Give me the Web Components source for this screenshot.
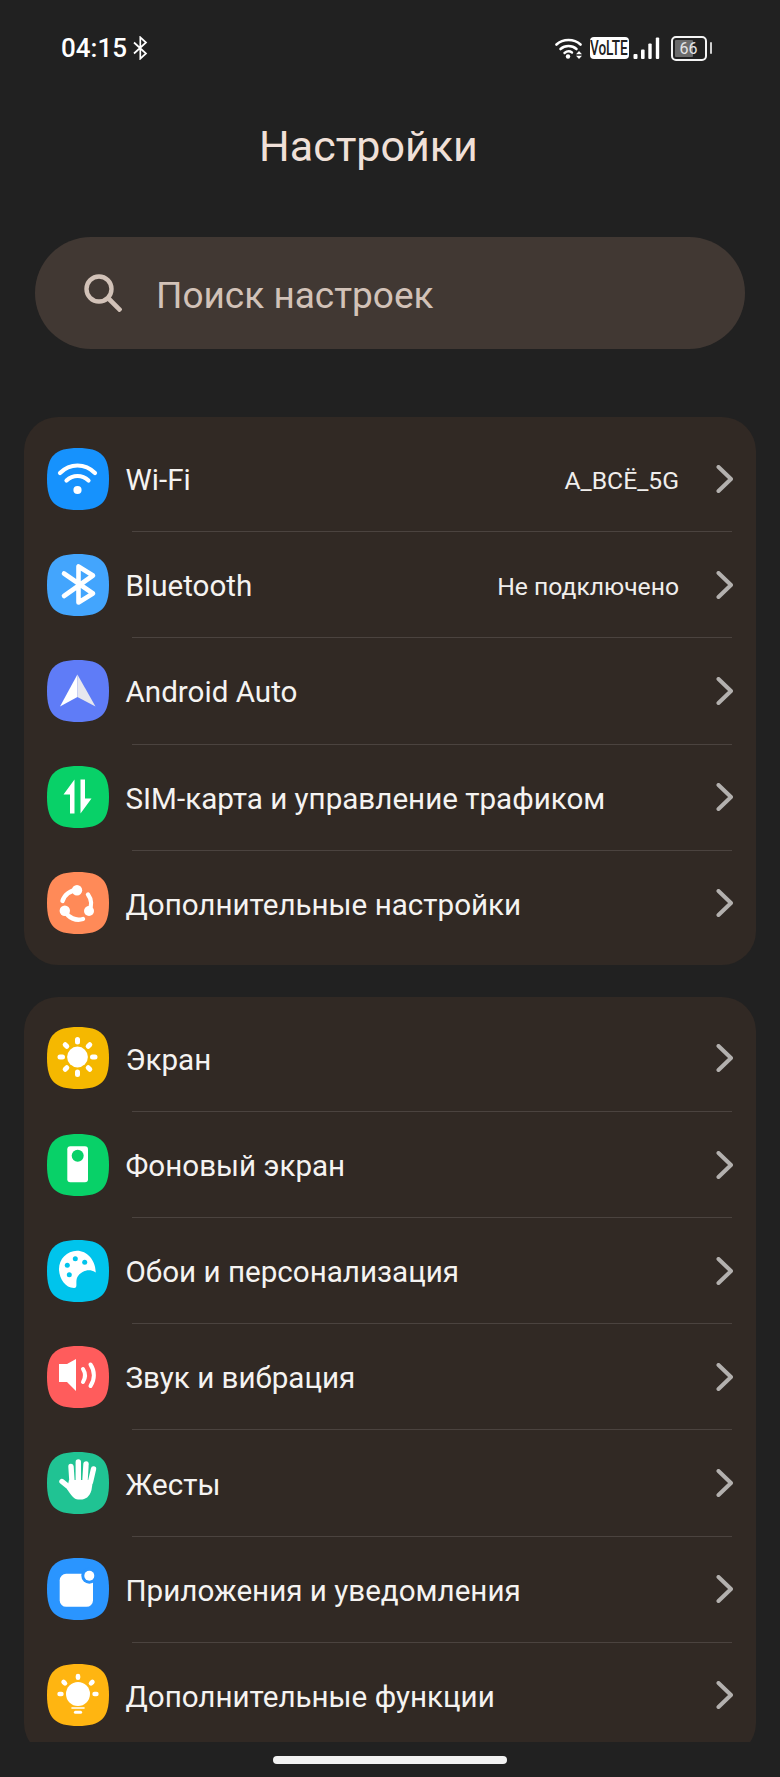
<!DOCTYPE html>
<html lang="ru">
<head>
<meta charset="utf-8">
<title>Настройки</title>
<style>
    html, body { margin: 0; background: #212121; }
    body { font-family: Roboto, "Noto Sans", sans-serif; }
</style>
</head>
<body>
<settings-screen>
    <status-bar time="04:15" battery="66"></status-bar>
    <page-title>Настройки</page-title>
    <search-field>Поиск настроек</search-field>
    <settings-group>
        <settings-row icon="wifi" value="A_ВСЁ_5G">Wi-Fi</settings-row>
        <settings-row icon="bluetooth" value="Не подключено">Bluetooth</settings-row>
        <settings-row icon="auto">Android Auto</settings-row>
        <settings-row icon="sim">SIM-карта и управление трафиком</settings-row>
        <settings-row icon="more">Дополнительные настройки</settings-row>
    </settings-group>
    <settings-group>
        <settings-row icon="display">Экран</settings-row>
        <settings-row icon="background">Фоновый экран</settings-row>
        <settings-row icon="palette">Обои и персонализация</settings-row>
        <settings-row icon="sound">Звук и вибрация</settings-row>
        <settings-row icon="gesture">Жесты</settings-row>
        <settings-row icon="apps">Приложения и уведомления</settings-row>
        <settings-row icon="extra">Дополнительные функции</settings-row>
    </settings-group>
</settings-screen>

<script>
const ICONS = {
    wifi: { bg: "#1692fd", art: `
        <g fill="none" stroke="#fff" stroke-width="4.2" stroke-linecap="round">
            <path d="M13 25C23 15 38 15 48 25"/>
            <path d="M19.5 32.5C26 26.5 35 26.5 41.5 32.5"/>
        </g>
        <circle cx="30.5" cy="42" r="4.1" fill="#fff"/>` },
    bluetooth: { bg: "#43a5fd", art: `
        <path d="M17 42L46 21.5 31.5 12.5V48.5L46 39.5 17 19.5" fill="none" stroke="#fff" stroke-width="4.6" stroke-linejoin="round" stroke-linecap="round"/>` },
    auto: { bg: "#5f7cf7", art: `
        <path d="M30.4 14.5L13 46.5 30.4 37Z" fill="#fff"/>
        <path d="M30.4 14.5L48.5 46.5 30.4 37Z" fill="#e6e7ee"/>` },
    sim: { bg: "#08d168", art: `
        <path d="M27.5 47.5V13.5L16.5 28.5H23V47.5Z" fill="#fff"/>
        <path d="M33.5 13.5V47.5L44.5 32.5H38V13.5Z" fill="#fff"/>` },
    more: { bg: "#ff8a58", art: `
        <g fill="none" stroke="#fff" stroke-width="4.4" stroke-linecap="round">
            <path d="M30 18.3A15 15 0 0 0 15.5 29"/>
            <path d="M18 39A15 15 0 0 0 36 47"/>
            <path d="M42 39A15 15 0 0 0 41 22.5"/>
        </g>
        <g fill="#fff">
            <circle cx="30" cy="18.3" r="5.2"/>
            <circle cx="42" cy="39" r="5"/>
            <circle cx="17.8" cy="38.8" r="5.2"/>
        </g>` },
    display: { bg: "#f5b800", art: `
        <circle cx="30.5" cy="30" r="10.4" fill="#fff"/>
        <g stroke="#fff" stroke-width="5" stroke-linecap="round">
            <path d="M30.5 12.5V15M30.5 45V47.5M13 30H15.5M45.5 30H48"/>
            <path d="M18.2 17.7L19.8 19.3M41.2 40.7L42.8 42.3M18.2 42.3L19.8 40.7M41.2 19.3L42.8 17.7"/>
        </g>` },
    background: { bg: "#08d168", art: `
        <rect x="20.3" y="12.3" width="20.7" height="36" rx="3" fill="#fff"/>
        <circle cx="30.7" cy="21.7" r="6" fill="#08d168"/>` },
    palette: { bg: "#00c4ec", art: `
        <path d="M48.7 32.5C48.7 20 40 10.7 30 10.7 20 10.7 12 19 12 29 12 38 18 48 27 48 30.5 48 29 44 29.5 40 30.5 33 41 27 48.7 32.5Z" fill="#fff"/>
        <g fill="#00c4ec">
            <circle cx="20.3" cy="25.3" r="2.5"/>
            <circle cx="28.3" cy="18.7" r="2.5"/>
            <circle cx="37.7" cy="22.3" r="2.5"/>
            <circle cx="22.3" cy="34.7" r="2.5"/>
        </g>` },
    sound: { bg: "#ff5c5c", art: `
        <path d="M12 18H20L29 13V45L20 36H12Z" fill="#fff"/>
        <g fill="none" stroke="#fff" stroke-width="4" stroke-linecap="round">
            <path d="M36 23C38.5 27 38.5 32 36 36"/>
            <path d="M43.5 18.5C48 25 48 33.5 43.5 40"/>
        </g>` },
    gesture: { bg: "#20c393", art: `
        <g fill="none" stroke="#fff" stroke-width="5.4" stroke-linecap="round">
            <path d="M24 14.5L25 30"/>
            <path d="M31.3 10V29"/>
            <path d="M39 12L38 29"/>
            <path d="M46.5 17L43.5 30"/>
            <path d="M15 29.5L23 36"/>
        </g>
        <path d="M22 28H46L44.5 38C42.5 45 38.5 47.5 33.5 47.5H31C27 47.5 24 43 20 37Z" fill="#fff"/>` },
    apps: { bg: "#2a95ff", art: `
        <rect x="12.7" y="15.8" width="33.3" height="33" rx="6.5" fill="#fff"/>
        <circle cx="42.3" cy="17.7" r="8" fill="#2a95ff"/>
        <circle cx="42.3" cy="17.7" r="5" fill="#fff"/>` },
    extra: { bg: "#ffb511", art: `
        <circle cx="31" cy="30" r="12" fill="#fff"/>
        <g stroke="#fff" stroke-width="4.6" stroke-linecap="round">
            <path d="M31 12V13.8M12.6 30H14.4M47.6 30H49.4"/>
            <path d="M16.6 18L18 19.4M45.4 18L44 19.4"/>
        </g>
        <path d="M25 44H37" stroke="#fff" stroke-width="1.6" stroke-linecap="round"/>
        <path d="M28.4 48.3H33.6" stroke="#fff" stroke-width="3" stroke-linecap="round"/>` }
};

class SettingsScreen extends HTMLElement {
    constructor() {
        super();
        this.attachShadow({ mode: "open" });
        this.shadowRoot.innerHTML = `
        <style>
            :host {
                display: flex;
                flex-direction: column;
                width: 780px;
                height: 1777px;
                overflow: hidden;
                background: #212121;
                font-family: Roboto, "Noto Sans", sans-serif;
            }
            .list {
                display: flex;
                flex-direction: column;
                gap: 32px;
                height: 1325px;
                margin: 0 24px;
                overflow: hidden;
            }
            .home {
                width: 234px;
                height: 8px;
                margin: 14px auto 0;
                border-radius: 4px;
                background: #f2f2f2;
            }
        </style>
        <slot name="top"></slot>
        <div class="list"><slot></slot></div>
        <div class="home"></div>
        `;
    }
    connectedCallback() {
        for (const el of this.children) {
            if (el.localName !== "settings-group") el.slot = "top";
        }
    }
}

class StatusBar extends HTMLElement {
    constructor() {
        super();
        this.attachShadow({ mode: "open" });
    }
    connectedCallback() {
        this.shadowRoot.innerHTML = `
        <style>
            :host {
                display: flex;
                align-items: center;
                height: 36px;
                padding: 30px 68px 0 61px;
                color: #fff;
            }
            .time { font-size: 26px; font-weight: 500; line-height: 36px; }
            .bt { margin-left: 6px; }
            .right { display: flex; align-items: center; margin-left: auto; }
            .volte {
                width: 39px;
                height: 22px;
                margin: 0 4px 0 7px;
                border-radius: 4px;
                background: #fff;
                color: #212121;
                display: flex;
                justify-content: center;
                align-items: center;
                overflow: hidden;
            }
            .volte span { flex: none; font-size: 20px; font-weight: 500; line-height: 22px; transform: scaleX(.68); }
            .bars { margin-right: 11px; }
            .batt {
                position: relative;
                box-sizing: border-box;
                width: 36px;
                height: 25px;
                border: 2px solid #f4f4f4;
                border-radius: 5px;
                padding: 2px;
                display: flex;
            }
            .fill { width: 66%; background: #6b6b6b; border-radius: 1px; }
            .pct {
                position: absolute;
                inset: 0;
                text-align: center;
                font-size: 16px;
                line-height: 21px;
                color: #e4e4e4;
            }
            .nub { width: 2.5px; height: 12px; margin-left: 3px; background: #cfcfcf; border-radius: 1px; }
        </style>
        <span class="time">${this.getAttribute("time")}</span>
        <svg class="bt" width="15" height="24" viewBox="0 0 15 24" fill="none" stroke="#fff" stroke-width="1.7">
            <path d="M1 6.5L13 17.5 7.3 22.7V1.3L13 6.5 1 17.5"/>
        </svg>
        <div class="right">
            <svg width="28" height="22" viewBox="0 0 28 22" fill="none" stroke="#fff" stroke-linecap="round">
                <path d="M1.5 7.5C8 1.5 19 1.5 25.5 7.5" stroke-width="2.6"/>
                <path d="M5.5 12C10 8 17 8 21.5 12" stroke-width="2.6"/>
                <path d="M9.5 16C12 14 15 14 17 15.5" stroke-width="2.4"/>
                <circle cx="13" cy="19.5" r="2.2" fill="#fff" stroke="none"/>
                <path d="M24 14L21 17.2H27ZM24 22L21 18.8H27Z" fill="#fff" stroke="none"/>
            </svg>
            <div class="volte"><span>VoLTE</span></div>
            <svg class="bars" width="27" height="22" viewBox="0 0 27 22" fill="#fff">
                <rect x="0.5" y="17" width="4" height="5" rx="1"/>
                <rect x="8" y="12.5" width="3.6" height="9.5" rx="1"/>
                <rect x="15.3" y="6.5" width="3.4" height="15.5" rx="1"/>
                <rect x="22.8" y="0.5" width="3.4" height="21.5" rx="1"/>
            </svg>
            <div class="batt"><div class="fill"></div><span class="pct">${this.getAttribute("battery")}</span></div>
            <div class="nub"></div>
        </div>
        `;
    }
}

class PageTitle extends HTMLElement {
    constructor() {
        super();
        this.attachShadow({ mode: "open" });
        this.shadowRoot.innerHTML = `
        <style>
            :host {
                display: block;
                height: 50px;
                margin-top: 55px;
                padding-right: 43px;
                text-align: center;
                font-size: 43px;
                line-height: 50px;
                color: #f0e0d8;
            }
        </style>
        <slot></slot>
        `;
    }
}

class SearchField extends HTMLElement {
    constructor() {
        super();
        this.attachShadow({ mode: "open" });
        this.shadowRoot.innerHTML = `
        <style>
            :host {
                display: flex;
                align-items: center;
                height: 112px;
                margin: 66px 35px 68px;
                padding-left: 49px;
                border-radius: 56px;
                background: #413833;
                color: #d2c2b8;
                font-size: 37px;
            }
            svg { margin-right: 34px; }
            span { padding-top: 4px; }
        </style>
        <svg width="38" height="38" viewBox="0 0 38 38" fill="none" stroke="#d2c2b8" stroke-width="4.4">
            <circle cx="15" cy="15" r="12.5"/>
            <path d="M24 24L37 37" stroke-width="4.6"/>
        </svg>
        <span><slot></slot></span>
        `;
    }
}

class SettingsGroup extends HTMLElement {
    constructor() {
        super();
        this.attachShadow({ mode: "open" });
        this.shadowRoot.innerHTML = `
        <style>
            :host {
                display: block;
                flex: none;
                padding: 9px 0 7.8px;
                border-radius: 34px;
                background: #312924;
            }
        </style>
        <slot></slot>
        `;
    }
}

class SettingsRow extends HTMLElement {
    constructor() {
        super();
        this.attachShadow({ mode: "open" });
    }
    connectedCallback() {
        const icon = ICONS[this.getAttribute("icon")];
        const value = this.getAttribute("value");
        this.shadowRoot.innerHTML = `
        <style>
            :host { display: block; }
            :host(:last-child) .rule { visibility: hidden; }
            .row {
                display: flex;
                align-items: center;
                height: 105.2px;
                padding: 0 23px;
            }
            .icon { flex: none; display: block; }
            .label {
                flex: 1;
                margin-left: 16.5px;
                padding-top: 3px;
                font-size: 29.6px;
                color: #f5f3f1;
                white-space: nowrap;
            }
            .value { margin-right: 37px; padding-top: 3px; font-size: 24.7px; color: #f0eeec; white-space: nowrap; }
            .chev { flex: none; }
            .rule { height: 1px; margin: 0 24px 0 108px; background: #4b433f; }
        </style>
        <div class="row">
            <svg class="icon" width="62" height="62" viewBox="0 0 62 62">
                <path d="M31 0C54 0 62 8 62 31S54 62 31 62 0 54 0 31 8 0 31 0Z" fill="${icon.bg}"/>
                ${icon.art}
            </svg>
            <span class="label"><slot></slot></span>
            ${value ? `<span class="value">${value}</span>` : ""}
            <svg class="chev" width="17" height="28" viewBox="0 0 17 28" fill="none" stroke="#b3b0ae" stroke-width="4" stroke-linecap="round" stroke-linejoin="round">
                <path d="M2.5 2L15 14 2.5 26"/>
            </svg>
        </div>
        <div class="rule"></div>
        `;
    }
}

customElements.define("settings-screen", SettingsScreen);
customElements.define("status-bar", StatusBar);
customElements.define("page-title", PageTitle);
customElements.define("search-field", SearchField);
customElements.define("settings-group", SettingsGroup);
customElements.define("settings-row", SettingsRow);
</script>
</body>
</html>
